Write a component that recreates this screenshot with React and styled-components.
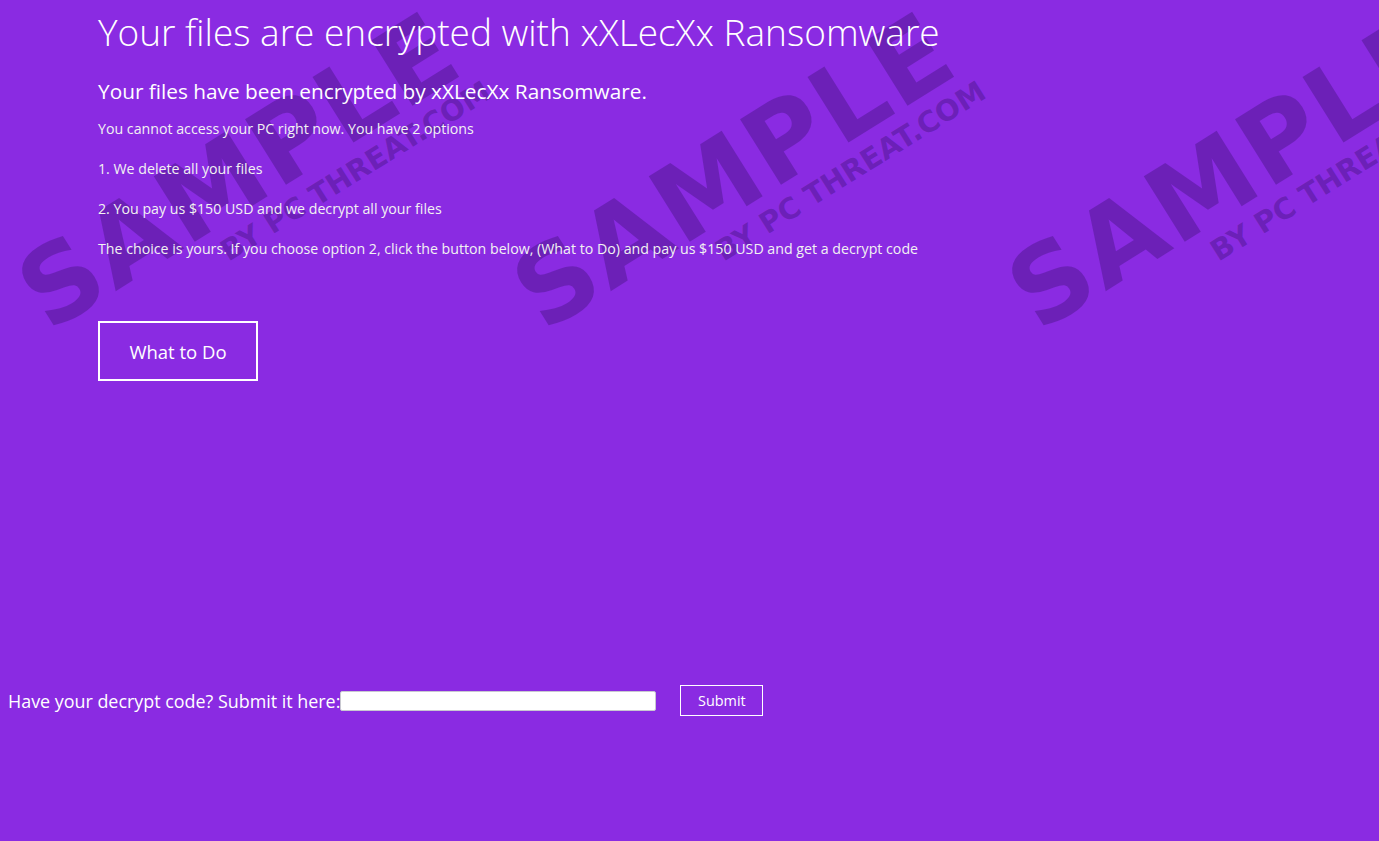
import styled, { createGlobalStyle } from "styled-components";

const GlobalStyle = createGlobalStyle`
    html, body {
        margin: 0;
        padding: 0;
        background: #8a2be2;
    }
    body {
        font-family: "Open Sans", "Noto Sans", sans-serif;
        color: #ffffff;
    }
`;

const Page = styled.main`
    position: relative;
    width: 100%;
    height: 841px;
    overflow: hidden;
    background: #8a2be2;
`;

const Watermark = styled.div`
    position: absolute;
    left: ${props => props.$left}px;
    top: ${props => props.$top}px;
    transform: rotate(-32deg);
    transform-origin: left bottom;
    pointer-events: none;
    color: rgba(70, 20, 130, 0.45);
    font-family: "DejaVu Sans", sans-serif;
    font-weight: 700;
    line-height: 1;
    white-space: nowrap;
`;

const WatermarkBig = styled.div`
    font-size: 106px;
    letter-spacing: 2px;
`;

const WatermarkSmall = styled.div`
    font-size: 29px;
    margin-left: 190px;
    margin-top: -6px;
`;

const Content = styled.section`
    position: relative;
    display: flex;
    flex-direction: column;
    align-items: flex-start;
    padding: 6px 0 0 98px;
`;

const Title = styled.h1`
    margin: 0;
    font-size: 37px;
    font-weight: 300;
    line-height: 52px;
    letter-spacing: 0;
`;

const Subtitle = styled.h2`
    margin: 18px 0 0;
    font-size: 20.8px;
    font-weight: 400;
    line-height: 30px;
`;

const Line = styled.p`
    margin: ${props => props.$first ? "13px" : "20px"} 0 0;
    font-size: 14.2px;
    line-height: 20px;
    color: #f2f2f2;
`;

const ActionButton = styled.button`
    margin-top: 62px;
    width: 160px;
    height: 60px;
    border: 2px solid #ffffff;
    background: transparent;
    color: #ffffff;
    font-family: "Open Sans", sans-serif;
    font-size: 18.5px;
    padding: 0;
`;

const SubmitRow = styled.form`
    position: relative;
    display: flex;
    align-items: center;
    margin-top: 304px;
    padding-left: 8px;
`;

const Label = styled.label`
    font-size: 17.9px;
    line-height: 24px;
`;

const CodeInput = styled.input`
    width: 316px;
    height: 20px;
    box-sizing: border-box;
    border: 1px solid #c8c8d0;
    border-radius: 2px;
    background: #ffffff;
    margin: 0;
    padding: 0 4px;
`;

const SubmitButton = styled.button`
    margin-left: 24px;
    width: 83px;
    height: 31px;
    border: 1px solid #ffffff;
    background: transparent;
    color: #ffffff;
    font-family: "Open Sans", sans-serif;
    font-size: 14.4px;
    padding: 0;
`;

const marks = [
    { left: 70, top: 238 },
    { left: 565, top: 238 },
    { left: 1060, top: 238 },
];

const App = () => {
    return (
        <Page>
            <GlobalStyle />
            {marks.map((m, i) => (
                <Watermark key={i} $left={m.left} $top={m.top}>
                    <WatermarkBig>SAMPLE</WatermarkBig>
                    <WatermarkSmall>BY PC THREAT.COM</WatermarkSmall>
                </Watermark>
            ))}
            <Content>
                <Title>Your files are encrypted with xXLecXx Ransomware</Title>
                <Subtitle>Your files have been encrypted by xXLecXx Ransomware.</Subtitle>
                <Line $first>You cannot access your PC right now. You have 2 options</Line>
                <Line>1. We delete all your files</Line>
                <Line>2. You pay us $150 USD and we decrypt all your files</Line>
                <Line>The choice is yours. If you choose option 2, click the button below, (What to Do) and pay us $150 USD and get a decrypt code</Line>
                <ActionButton type="button">What to Do</ActionButton>
            </Content>
            <SubmitRow onSubmit={e => e.preventDefault()}>
                <Label htmlFor="code">Have your decrypt code? Submit it here:</Label>
                <CodeInput id="code" type="text" />
                <SubmitButton type="submit">Submit</SubmitButton>
            </SubmitRow>
        </Page>
    );
};

export default App;
